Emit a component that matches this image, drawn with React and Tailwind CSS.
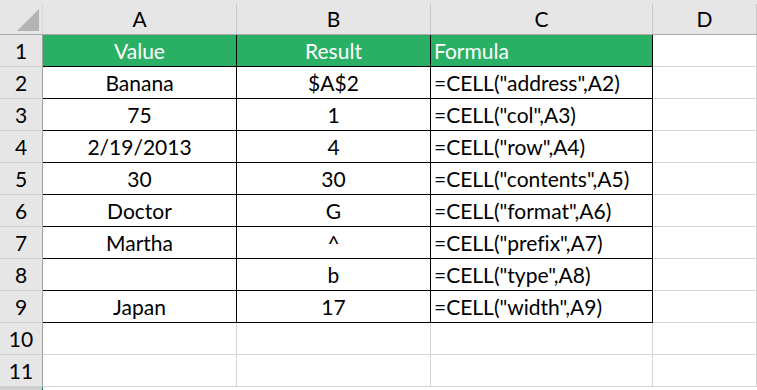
import React from 'react';

const rows = [
  ['Banana', '$A$2', '=CELL("address",A2)'],
  ['75', '1', '=CELL("col",A3)'],
  ['2/19/2013', '4', '=CELL("row",A4)'],
  ['30', '30', '=CELL("contents",A5)'],
  ['Doctor', 'G', '=CELL("format",A6)'],
  ['Martha', '^', '=CELL("prefix",A7)'],
  ['', 'b', '=CELL("type",A8)'],
  ['Japan', '17', '=CELL("width",A9)'],
];

const font = { fontFamily: 'Lato, "Liberation Sans", sans-serif' };

function RowHead({ n }) {
  return (
    <div className="w-[43px] h-full flex items-center justify-center pt-[1px] bg-[#e6e6e6] border-r border-b border-r-[#9f9f9f] border-b-[#d0d0d0] text-[21px] text-black">
      {n}
    </div>
  );
}

export default function App() {
  return (
    <div className="w-[757px] h-[390px] bg-white overflow-hidden select-none [font-variant-ligatures:none]" style={font}>
      {/* column headers */}
      <div className="flex h-[35px] bg-[#e6e6e6] border-b border-[#a8a8a8] items-end">
        <div className="w-[43px] h-[30px] border-r border-[#d8d8d8] relative">
          <svg className="absolute left-[17px] top-[5px]" width="22" height="22" viewBox="0 0 22 22">
            <polygon points="22,0 22,22 0,22" fill="#b4b4b4" />
          </svg>
        </div>
        <div className="w-[194px] h-[30px] border-r border-[#c8c8c8] flex items-center justify-center text-[21px]">A</div>
        <div className="w-[194px] h-[30px] border-r border-[#c8c8c8] flex items-center justify-center text-[21px]">B</div>
        <div className="w-[222px] h-[30px] border-r border-[#c8c8c8] flex items-center justify-center text-[21px]">C</div>
        <div className="w-[104px] h-[30px] border-r border-[#c8c8c8] flex items-center justify-center text-[21px]">D</div>
      </div>

      {/* row 1: green header */}
      <div className="flex h-[32px]">
        <RowHead n={1} />
        <div className="w-[194px] bg-[#2ab064] border-r border-b border-black flex items-center justify-center pt-[1px] text-[21px] text-white">Value</div>
        <div className="w-[194px] bg-[#2ab064] border-r border-b border-black flex items-center justify-center pt-[1px] text-[21px] text-white">Result</div>
        <div className="w-[222px] bg-[#2ab064] border-r border-b border-black flex items-center pl-[3px] pt-[1px] text-[21px] text-white">Formula</div>
        <div className="w-[104px] border-r border-b border-[#d4d4d4]" />
      </div>

      {rows.map((r, i) => (
        <div key={i} className="flex h-[32px]">
          <RowHead n={i + 2} />
          <div className="w-[194px] border-r border-b border-black flex items-center justify-center pt-[1px] text-[21px] text-black">{r[0]}</div>
          <div className="w-[194px] border-r border-b border-black flex items-center justify-center pt-[1px] text-[21px] text-black">{r[1]}</div>
          <div className="w-[222px] border-r border-b border-black flex items-center pl-[3px] pt-[1px] text-[21px] text-black whitespace-nowrap">{r[2]}</div>
          <div className="w-[104px] border-r border-b border-[#d4d4d4]" />
        </div>
      ))}

      {[10, 11].map((n) => (
        <div key={n} className="flex h-[32px]">
          <RowHead n={n} />
          <div className="w-[194px] border-r border-b border-[#d4d4d4]" />
          <div className="w-[194px] border-r border-b border-[#d4d4d4]" />
          <div className="w-[222px] border-r border-b border-[#d4d4d4]" />
          <div className="w-[104px] border-r border-b border-[#d4d4d4]" />
        </div>
      ))}

      <div className="flex h-[3px]">
        <div className="w-[43px] bg-[#cfcfcf] border-r border-[#1e7145]" />
      </div>
    </div>
  );
}
